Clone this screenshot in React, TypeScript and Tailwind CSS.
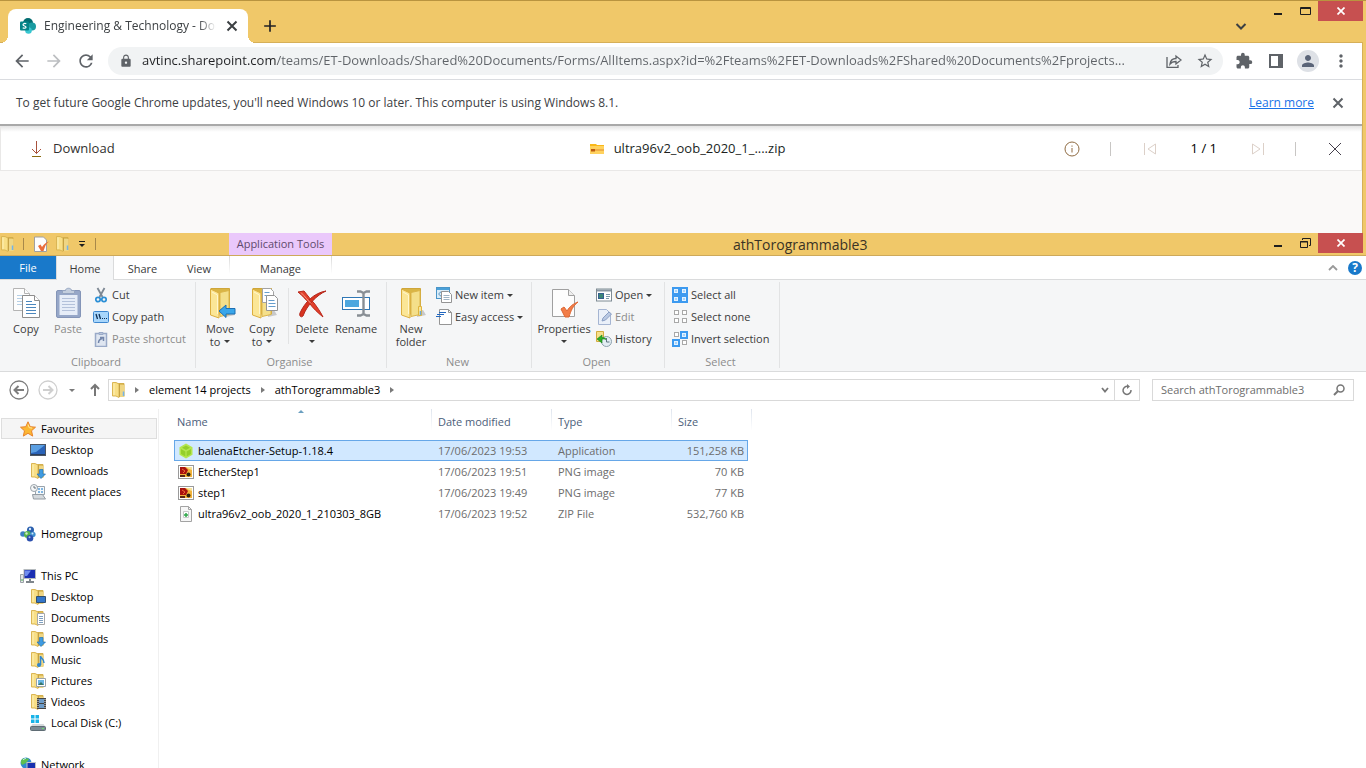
import { ReactNode } from "react";
import {
  MdAdd,
  MdArrowBack,
  MdArrowForward,
  MdExtension,
  MdLock,
  MdMoreVert,
  MdPerson,
  MdRefresh,
  MdStarBorder,
} from "react-icons/md";

const url =
  "avtinc.sharepoint.com/teams/ET-Downloads/Shared%20Documents/Forms/AllItems.aspx?id=%2Fteams%2FET-Downloads%2FShared%20Documents%2Fprojects...";

// ---------- icons ----------

const Svg = ({ size = 16, children }: { size?: number; children: ReactNode }) => (
  <svg width={size} height={size} viewBox={`0 0 ${size} ${size}`} className="shrink-0" fill="none" aria-hidden="true">
    {children}
  </svg>
);

const CrossIcon = () => (
  <Svg>
    <path d="M3.500 3.500l9 9M12.500 3.500l-9 9" stroke="currentColor" strokeWidth="2" />
  </Svg>
);

const ChevronIcon = () => (
  <Svg>
    <path d="M3.500 6l4.500 4.500L12.500 6" stroke="currentColor" strokeWidth="2" />
  </Svg>
);

const FolderShape = () => (
  <>
    <path d="M5.500 1.500h7.500v12.500H5.500z" fill="#dfbe5c" stroke="#d3ae4c" />
    <path d="M9 3h4.500v12H8z" fill="#efd684" />
    <path d="M1.500.500H5l3 1.500v13.500l-3-1.500H1.500z" fill="#f8df86" stroke="#dbb654" />
    <path d="M3 1.500v11.500" stroke="#fdf1ba" />
    <path d="M8.500 2v13" stroke="#bf9a3c" strokeWidth=".8" />
  </>
);

const FolderIcon = ({ children }: { children?: ReactNode }) => (
  <Svg>
    <FolderShape />
    {children ?? <path d="M12.500 9.500v4.500" stroke="#74b4e8" strokeWidth="1.500" />}
  </Svg>
);

const BigFolder = ({ children }: { children?: ReactNode }) => (
  <Svg size={32}>
    <g transform="translate(2 0)">
      <path d="M20 30l9-2-3-5-6 1z" fill="#000" opacity=".18" />
      <path d="M5 1.500h18.500V27H12z" fill="#d9b545" stroke="#cfa63a" />
      <path d="M14 5.500l9-2v24l-9 2z" fill="#f4df8a" stroke="#dcb54a" />
      <path d="M4.500 2L13 6v25l-8.500-3z" fill="#fbe696" stroke="#dcae3f" />
      <path d="M6 5l5.500 3v19" stroke="#fff6cc" />
    </g>
    {children ?? (
      <>
        <path d="M23.500 19.500h3v9h-3z" fill="#f8e69a" stroke="#e0b53e" />
        <path d="M25.500 24v4" stroke="#6aa9e0" strokeWidth="1.500" />
      </>
    )}
  </Svg>
);

const CopyIcon = () => (
  <Svg size={32}>
    <g stroke="#b4b4b4" fill="#fdfdfd">
      <path d="M3.500 1.500h11l5 5v17h-16z" />
      <path d="M14.500 1.500v5h5" />
    </g>
    <path d="M7 8.500h6M7 11.500h5M7 14.500h5M7 17.500h5" stroke="#b5cfe6" />
    <g stroke="#8d8d8d" fill="#fff">
      <path d="M12.500 8.500h12l5 5v17h-17z" />
      <path d="M24.500 8.500v5h5" />
    </g>
    <path d="M16 14.500h6M16 17.500h10M16 20.500h10M16 23.500h10M16 26.500h10" stroke="#4c87bd" />
  </Svg>
);

const PasteIcon = () => (
  <Svg size={32}>
    <rect x="4.500" y="3.500" width="24" height="27" rx="1.500" fill="#96a7c8" stroke="#8495b8" />
    <rect x="7.500" y="8" width="18" height="20" fill="#e6edf8" />
    <path d="M10 11.500h13M10 14.500h13M10 17.500h13M10 20.500h13M10 23.500h13" stroke="#b3c1da" />
    <path d="M10.500 6.500v-3h3c0-3 6-3 6 0h3v3z" fill="#c3cede" stroke="#94a4c0" />
  </Svg>
);

const CutIcon = () => (
  <Svg>
    <path d="M4.500 1l5 9M11.500 1l-5 9" stroke="#7d8894" strokeWidth="1.800" />
    <circle cx="5" cy="12.500" r="2.200" stroke="#2b8fd6" strokeWidth="1.700" />
    <circle cx="11" cy="12.500" r="2.200" stroke="#2b8fd6" strokeWidth="1.700" />
  </Svg>
);

const CopyPathIcon = () => (
  <Svg>
    <rect x=".5" y="2.500" width="15" height="11" rx="1" fill="#a8d6fb" stroke="#3d86cf" />
    <path d="M3 5l1.500 5M6 5l1.500 5" stroke="#0f2f55" strokeWidth="1.300" />
    <path d="M9 9.500h1M11 9.500h1M13 9.500h1" stroke="#0f2f55" />
  </Svg>
);

const PasteShortcutIcon = () => (
  <Svg>
    <rect x="2.500" y="2.500" width="11" height="13" fill="#dfe6f1" stroke="#9aaac8" strokeWidth="1.500" />
    <path d="M6 1.500h4v2H6z" fill="#b9c5da" stroke="#9aaac8" />
    <path d="M5.500 12c0-3 1-4 4-4.500M7 6.500h3.500V10" stroke="#7386ab" strokeWidth="1.500" />
  </Svg>
);

const DeleteIcon = () => (
  <Svg size={32}>
    <path d="M2 5l6-1c4 5 7 9 10 12 3 4 6 8 9 14-6-5-10-9-13-13C10 13 6 8 2 5z" fill="#e2402b" stroke="#b9281b" />
    <path d="M30 4C21 8 11 18 7 29c-2 2-4 0-3-3C9 15 18 6 30 4z" fill="#d83420" stroke="#b3261a" />
    <path d="M5 5.500c4 4 7 8 10 11" stroke="#f59a84" />
  </Svg>
);

const RenameIcon = () => (
  <Svg size={32}>
    <rect x="2.500" y="10.500" width="27" height="12" fill="#fff" stroke="#2f77b5" />
    <rect x="5" y="13" width="14" height="7" fill="#4ea7de" />
    <path d="M17 4.500h3.500l3 1.500 3-1.500H30M17 28.500h3.500l3-1.500 3 1.500H30M23.500 6v21" stroke="#888e94" strokeWidth="2.400" />
  </Svg>
);

const NewItemIcon = () => (
  <Svg>
    <rect x=".5" y=".5" width="13" height="11" fill="#d9ecf8" stroke="#4a95c8" />
    <path d="M1 2h12" stroke="#4aa0d8" strokeWidth="2" />
    <path d="M6 5c-4 0-4 4 0 4" stroke="#4f8ebd" />
    <path d="M5.500 4.500h7l3 3v8h-10z" fill="#fff" stroke="#949494" />
    <path d="M7.500 8.500h6M7.500 10.500h6M7.500 12.500h6" stroke="#9fb4c4" />
  </Svg>
);

const EasyAccessIcon = () => (
  <Svg>
    <path d="M3.500.500h9l3 3v12h-12z" fill="#fff" stroke="#959595" />
    <path d="M12.500.500v3h3" stroke="#959595" />
    <path d="M3 3.500h7M1 5.500h7M0 7.500h5" stroke="#2167c0" strokeWidth="1.200" />
  </Svg>
);

const PropertiesIcon = () => (
  <Svg size={32}>
    <path d="M4.500 2.500h16l6 6v21h-22z" fill="#fdfdfd" stroke="#a0a0a0" />
    <path d="M20.500 2.500v6h6" fill="#eee" stroke="#a0a0a0" />
    <path d="M13 22l3-2 3 4c3-5 6-7 11-9-5 4-7 8-9 15h-4z" fill="#f27d48" stroke="#dd6632" />
  </Svg>
);

const CheckedPage = () => (
  <Svg>
    <path d="M1.500 1h9l3 3v11.500h-12z" fill="#fdfdfd" stroke="#a0a0a0" />
    <path d="M5 10l2.500-1.500L9 11c2-3 4-4.500 7-5.500-3 2-4 5-5.500 9.500H8z" fill="#ea6d3b" />
  </Svg>
);

const OpenIcon = () => (
  <Svg>
    <rect x=".5" y="2" width="15" height="12" fill="#fff" stroke="#7f8b94" />
    <path d="M1 3.500h14" stroke="#8b98a3" strokeWidth="2" />
    <rect x="2.500" y="6.500" width="5" height="5" fill="#3c8677" stroke="#35608f" />
    <path d="M10 7.500h4M10 9.500h4M10 11.500h3" stroke="#7d9aaa" />
  </Svg>
);

const EditIcon = () => (
  <Svg>
    <path d="M2.500.500h8l4 4v11h-12z" fill="#eaf0f9" stroke="#a5b5d2" />
    <path d="M6 12l1-3 6-6 2.500 2-6 6z" fill="#b9c9e3" stroke="#8b9fc4" />
  </Svg>
);

const HistoryIcon = () => (
  <Svg>
    <path d="M.5.500h7v10h-7z" fill="#f5e08c" stroke="#d2ab3e" />
    <circle cx="10.500" cy="10.500" r="5" fill="#e3edf3" stroke="#8ca0ad" />
    <path d="M10.500 7v4h3" stroke="#5d7482" />
    <path d="M1 8l5-4v2.500c3 0 4 1 4 2-1-.5-2-.5-4-.5V12z" fill="#2cae26" stroke="#16821a" strokeWidth=".6" />
  </Svg>
);

// tiles that are picked are filled blue, the others are left grey
const SelectIcon = ({ picked }: { picked: boolean[] }) => (
  <Svg>
    {picked.map((on, i) => {
      const x = (i % 2) * 8;
      const y = Math.floor(i / 2) * 8;
      return on ? (
        <g key={i}>
          <rect x={x} y={y} width="8" height="8" fill="#3c9af0" />
          <rect x={x + 2.5} y={y + 2.5} width="3" height="3" fill="#a7d4fb" stroke="#e3f2ff" />
        </g>
      ) : (
        <rect key={i} x={x + 2.5} y={y + 1.5} width="4" height="4" fill="#fff" stroke="#a8a8a8" />
      );
    })}
  </Svg>
);

const StarIcon = () => (
  <Svg>
    <path d="M8 .8l2.200 4.900 5.300.5-4 3.600 1.200 5.300L8 12.300l-4.700 2.800 1.200-5.300-4-3.600 5.300-.5z" fill="#fbb733" stroke="#e8822a" />
    <path d="M8 3.500l1.200 3.200 3 .4" stroke="#ffe99a" />
  </Svg>
);

const DesktopIcon = () => (
  <Svg>
    <rect x=".5" y="2.500" width="15" height="11" fill="#2a63b8" stroke="#4b5563" />
    <path d="M1 3h14L6 10l-5 1z" fill="#5b9fe2" />
    <path d="M1 12.500h14" stroke="#2b3f5c" />
  </Svg>
);

const RecentIcon = () => (
  <Svg>
    <path d="M5.500 2.500h9v8h-9z" fill="#f4f8fb" stroke="#99a3ab" />
    <path d="M8 5h2M11 5h2M8 8h2M11 8h2" stroke="#5aa0da" strokeWidth="1.500" />
    <path d="M2.500 10.500h10l3 4.500h-12z" fill="#d5dade" stroke="#949ca3" />
    <circle cx="4" cy="4" r="3.500" fill="#f5f7f8" stroke="#9aa3aa" />
    <path d="M4 2v2h2" stroke="#66727b" />
  </Svg>
);

const HomegroupIcon = () => (
  <Svg>
    <circle cx="3" cy="8" r="2.800" fill="#3b7fc4" />
    <circle cx="10.500" cy="4" r="3.500" fill="#2a5fae" />
    <circle cx="7.500" cy="8.500" r="3.500" fill="#57b34a" />
    <circle cx="12.800" cy="8.500" r="2.800" fill="#3f8fce" />
    <circle cx="10" cy="12.300" r="3.300" fill="#2b4fae" />
    <circle cx="6.500" cy="7.500" r="1.200" fill="#cdeec6" />
    <circle cx="10" cy="3" r="1.200" fill="#d3e6f8" />
    <circle cx="9.500" cy="11.300" r="1" fill="#a9bdf0" />
    <circle cx="12.500" cy="7.500" r="1" fill="#d3e6f8" />
  </Svg>
);

const PcIcon = () => (
  <Svg>
    <path d="M.5 6.500h3v8h-3z" fill="#e0e4e7" stroke="#9aa1a7" />
    <path d="M2 11v2" stroke="#4bb34b" />
    <rect x="4" y="1.500" width="11.500" height="9" fill="#1b2fb2" stroke="#b5babe" />
    <path d="M5 2.500h6L7 8H5z" fill="#6f8cf0" />
    <path d="M10 11v2M6 14h8" stroke="#7f868c" strokeWidth="2" />
  </Svg>
);

const NetworkIcon = () => (
  <Svg>
    <circle cx="6" cy="6" r="5.500" fill="#2f8ad0" />
    <path d="M3 1.500C6 2 8 1 9 2L6 6 2 8C0 5 1 3 3 1.500z" fill="#5fc04e" />
    <path d="M3 3c1-1 2-1.500 3-1.500" stroke="#def5ff" />
    <rect x="7" y="5.500" width="8.500" height="8" fill="#1931b0" stroke="#c0c4c8" />
    <path d="M9 15h5" stroke="#80868b" />
  </Svg>
);

const DiskIcon = () => (
  <Svg>
    <path d="M1 0h3.500v3.500H1zM5.500 0H9v3.500H5.500zM1 4.500h3.500V8H1zM5.500 4.500H9V8H5.500z" fill="#18b3e8" />
    <path d="M2.500 9h11l2 3H.5z" fill="#d5d9dc" />
    <rect x=".5" y="11.500" width="15" height="4" rx="1" fill="#7c8a93" stroke="#5f6c74" />
    <path d="M12 13.500h2" stroke="#66e06d" />
  </Svg>
);

const EtcherIcon = () => (
  <Svg>
    <path d="M8 .5l6.500 3.700v7.600L8 15.500l-6.500-3.700V4.200z" fill="#b4e650" />
    <path d="M8 2.500l4 2.200-4 2.300-4-2.300zM3 6l4.400 2.500v5L3 11zM13 6L8.600 8.500v5L13 11z" fill="#94cf2c" />
  </Svg>
);

const PngIcon = () => (
  <Svg>
    <rect x=".5" y="1.500" width="15" height="13" fill="#fff" stroke="#9a9a9a" />
    <path d="M2 3h12v10H2z" fill="#f2b33a" />
    <path d="M2 3h5l3 3-2 4H2z" fill="#a8120e" />
    <path d="M8 3h6v3l-3-1z" fill="#f7e29a" />
    <circle cx="10.500" cy="10.500" r="2" fill="#2e2411" />
    <path d="M4 5l3 2-2 2" stroke="#f06a35" />
    <path d="M2 11h5v2H2z" fill="#5a2a14" />
  </Svg>
);

const ZipIcon = () => (
  <Svg>
    <path d="M2.500.500h8l3 3v12h-11z" fill="#f7f7f7" stroke="#a3a3a3" />
    <path d="M10.500.500v3h3" stroke="#a3a3a3" />
    <path d="M5.500 5.500h5v6h-5z" fill="#fff" stroke="#c8c8c8" />
    <path d="M8 7v4M6 9h4" stroke="#2fa84a" strokeWidth="1.500" />
  </Svg>
);

const SharePointLogo = () => (
  <Svg>
    <circle cx="8" cy="5" r="5" fill="#036c70" />
    <circle cx="12" cy="8.500" r="4" fill="#1a9ba1" />
    <circle cx="8.500" cy="12.500" r="3.300" fill="#37c6d0" />
    <rect x="0" y="3.500" width="9" height="9" rx="1" fill="#038387" />
    <path d="M6.300 5.800c-1.500-.7-3.300-.3-3.300 1 0 1.500 3 1 3 2.400 0 1.200-2 1.300-3.300.6" stroke="#fff" strokeWidth="1.200" />
  </Svg>
);

const Caret = () => <span className="block border-x-[3px] border-t-[3px] border-x-transparent border-t-current" />;

// ---------- shared controls ----------

const WindowButtons = ({ restore }: { restore?: boolean }) => (
  <div className="flex mr-[3px] text-[#1e1e1e]">
    <button aria-label="Minimise" className="w-7 h-5 grid place-items-center">
      <svg width="8" height="12" aria-hidden="true">
        <path d="M0 8h8v2H0z" fill="currentColor" />
      </svg>
    </button>
    <button aria-label="Maximise" className="w-[26px] h-5 grid place-items-center">
      <svg width="11" height="11" fill="none" stroke="currentColor" aria-hidden="true">
        {restore ? (
          <>
            <path d="M2.500 2V.5h8v7H9M.5 3.500h7v6h-7z" />
            <path d="M0 4h8" />
          </>
        ) : (
          <path d="M.5 1.500h10v7H.5zM0 2.500h11" />
        )}
      </svg>
    </button>
    <button aria-label="Close" className="w-[45px] h-5 bg-[#c75050] text-white grid place-items-center">
      <svg width="8" height="8" stroke="currentColor" strokeWidth="1.700" aria-hidden="true">
        <path d="M.5.500l7 7M7.500.500l-7 7" />
      </svg>
    </button>
  </div>
);

const BigButton = ({ icon, label, second, caret, muted }: any) => (
  <button className={`w-[42px] pt-[7px] flex flex-col items-center leading-[13px] ${muted ? "text-[#8c8c8c]" : "text-[#3b3b3b]"}`}>
    {icon}
    <span className="mt-[3px] whitespace-nowrap">{label}</span>
    {(second || caret) && (
      <span className="h-[13px] flex items-center gap-1">
        {second}
        {caret && <Caret />}
      </span>
    )}
  </button>
);

const SmallButton = ({ icon, label, caret, muted }: any) => (
  <button className={`h-[22px] flex items-center gap-[3px] whitespace-nowrap ${muted ? "text-[#8c8c8c]" : "text-[#3b3b3b]"}`}>
    {icon}
    {label}
    {caret && <Caret />}
  </button>
);

const Group = ({ name, className, children }: { name: string; className: string; children: ReactNode }) => (
  <section aria-label={name} className={`relative flex flex-col justify-between ${className}`}>
    <div className="flex">{children}</div>
    <div className="text-center text-[#8c8c8c] leading-[19px] pr-1">{name}</div>
    <span className="absolute right-0 top-[2px] bottom-[3px] w-px bg-[#e2e3e4]" />
  </section>
);

// ---------- data ----------

const DownloadsIcon = () => (
  <FolderIcon>
    <path d="M9.500 6.500h3.500V11h2.500L11 15.500 7 11h2.500z" fill="#3f9be0" stroke="#2772b5" strokeWidth=".7" />
  </FolderIcon>
);

const places: any[] = [
  { name: "Favourites", icon: <StarIcon />, root: true, active: true },
  { name: "Desktop", icon: <DesktopIcon /> },
  { name: "Downloads", icon: <DownloadsIcon /> },
  { name: "Recent places", icon: <RecentIcon /> },
  null,
  { name: "Homegroup", icon: <HomegroupIcon />, root: true },
  null,
  { name: "This PC", icon: <PcIcon />, root: true },
  {
    name: "Desktop",
    icon: (
      <FolderIcon>
        <path d="M6.500 7.500h9v6h-9z" fill="#3476ca" stroke="#33506f" />
      </FolderIcon>
    ),
  },
  {
    name: "Documents",
    icon: (
      <FolderIcon>
        <path d="M7.500 3.500h7v11h-7z" fill="#fff" stroke="#a7a7a7" />
        <path d="M9 6.500h4M9 8.500h4M9 10.500h4M9 12.500h4" stroke="#7d9fc0" />
      </FolderIcon>
    ),
  },
  { name: "Downloads", icon: <DownloadsIcon /> },
  {
    name: "Music",
    icon: (
      <FolderIcon>
        <path d="M10.500 13V4c0 2 4 3 3.500 7" stroke="#2f86cf" strokeWidth="1.500" />
        <circle cx="9" cy="13" r="2" fill="#2f86cf" />
      </FolderIcon>
    ),
  },
  {
    name: "Pictures",
    icon: (
      <FolderIcon>
        <path d="M6.500 5.500h9v8h-9z" fill="#fff" stroke="#9ba3a9" />
        <path d="M8 7h6v5H8z" fill="#6bb6e4" />
        <path d="M8 12l3-3 3 3z" fill="#39766a" />
      </FolderIcon>
    ),
  },
  {
    name: "Videos",
    icon: (
      <FolderIcon>
        <path d="M7 4h9v11H7z" fill="#444" />
        <path d="M9 5h5v4H9zM9 10h5v4H9z" fill="#6d9cc9" />
        <path d="M8 5v9M15 5v9" stroke="#e8e8e8" strokeDasharray="1 1" />
      </FolderIcon>
    ),
  },
  { name: "Local Disk (C:)", icon: <DiskIcon /> },
  null,
  { name: "Network", icon: <NetworkIcon />, root: true },
];

const files = [
  { name: "balenaEtcher-Setup-1.18.4", date: "17/06/2023 19:53", type: "Application", size: "151,258 KB", icon: <EtcherIcon />, selected: true },
  { name: "EtcherStep1", date: "17/06/2023 19:51", type: "PNG image", size: "70 KB", icon: <PngIcon /> },
  { name: "step1", date: "17/06/2023 19:49", type: "PNG image", size: "77 KB", icon: <PngIcon /> },
  { name: "ultra96v2_oob_2020_1_210303_8GB", date: "17/06/2023 19:52", type: "ZIP File", size: "532,760 KB", icon: <ZipIcon /> },
];

// ---------- browser ----------

function Browser() {
  return (
    <div className="shrink-0 h-[233px] flex flex-col bg-[#f0c869] border-t border-[#b9943f]">
      <div className="h-[42px] flex justify-between">
        <div className="flex items-end pl-2">
          <div className="relative h-[34px] w-60 rounded-t-lg bg-white flex items-center pl-3 pr-2 gap-2 text-[12px] text-[#3c4043]">
            <SharePointLogo />
            <span className="flex-1 overflow-hidden whitespace-nowrap [mask-image:linear-gradient(90deg,#000_90%,transparent)]">
              Engineering &amp; Technology - Documents
            </span>
            <button aria-label="Close tab">
              <CrossIcon />
            </button>
            <span className="absolute -left-2 bottom-0 size-2 bg-[radial-gradient(circle_at_0_0,transparent_8px,#fff_8px)]" />
            <span className="absolute -right-2 bottom-0 size-2 bg-[radial-gradient(circle_at_100%_0,transparent_8px,#fff_8px)]" />
          </div>
          <button aria-label="New tab" className="h-[34px] ml-3 text-[#202124]">
            <MdAdd size={20} />
          </button>
        </div>
        <div className="flex">
          <button aria-label="Search tabs" className="mt-2 mr-[15px] text-[#3c4043]">
            <ChevronIcon />
          </button>
          <WindowButtons />
        </div>
      </div>

      <div className="flex-1 mr-1 bg-white flex flex-col outline outline-[#c59f4c]/60">
        <div className="h-[37px] border-b border-[#dadce0] flex items-center pl-3 pr-[11px] text-[#5f6368]">
          <button aria-label="Back" className="mr-3">
            <MdArrowBack size={20} />
          </button>
          <button aria-label="Forward" className="mr-3 text-[#bcbec1]">
            <MdArrowForward size={20} />
          </button>
          <button aria-label="Reload" className="mr-3">
            <MdRefresh size={20} />
          </button>
          <div className="flex-1 min-w-0 h-7 rounded-full bg-[#f1f3f4] flex items-center pl-[11px] pr-[9px]">
            <MdLock size={14} className="shrink-0" />
            <input
              aria-label="Address"
              readOnly
              value={url}
              className="flex-1 min-w-0 ml-[9px] mr-4 text-[13px] text-transparent bg-clip-text bg-[linear-gradient(90deg,#202124_134px,#5f6368_134px)]"
            />
            <button aria-label="Share" className="mr-[14px]">
              <svg width="16" height="16" fill="none" stroke="currentColor" strokeWidth="1.300" aria-hidden="true">
                <path d="M1 4v10.300h11V12" />
                <path d="M4 11c.5-4 3-5.500 6-5.500V3l5 4-5 4V8.500c-2.500 0-4.500.5-6 2.500z" />
              </svg>
            </button>
            <button aria-label="Bookmark">
              <MdStarBorder size={18} />
            </button>
          </div>
          <button aria-label="Extensions" className="ml-3">
            <MdExtension size={18} />
          </button>
          <button aria-label="Side panel" className="ml-4">
            <svg width="14" height="14" fill="none" aria-hidden="true">
              <path d="M1 1h12v12H1z" stroke="currentColor" strokeWidth="2" />
              <path d="M9 1h4v12H9z" fill="currentColor" />
            </svg>
          </button>
          <button aria-label="Profile" className="ml-[14px] size-[22px] rounded-full bg-[#dee1e6] text-[#5a6478] grid place-items-center">
            <MdPerson size={18} />
          </button>
          <button aria-label="Menu" className="ml-3">
            <MdMoreVert size={20} />
          </button>
        </div>

        <div className="h-[46px] shrink-0 border-b-2 border-[#a9a9a9] flex items-center justify-between pl-4 pr-4 pt-px text-[12px] text-[#3c4043]">
          <span>To get future Google Chrome updates, you'll need Windows 10 or later. This computer is using Windows 8.1.</span>
          <div className="flex items-center gap-4">
            <a href="#" className="text-[#1a73e8] underline">
              Learn more
            </a>
            <button aria-label="Dismiss" className="text-[#5f6368]">
              <CrossIcon />
            </button>
          </div>
        </div>

        <div className="flex-1 bg-[#faf9f8]">
          <div className="h-[45px] grid grid-cols-[1fr_auto_1fr] items-center pt-px pl-[27px] pr-[19px] border border-t-0 border-[#e9e8e7] bg-[linear-gradient(#e4e4e4,#fff_6px)] text-[13px] text-[#323130]">
            <button className="flex items-center gap-[9px]">
              <svg width="16" height="16" fill="none" stroke="#a8513c" aria-hidden="true">
                <path d="M8.500 0v12.500M4 8l4.500 4.500L13 8" />
                <path d="M4 15.500h9" stroke="#8a6a10" />
              </svg>
              Download
            </button>
            <div className="ml-1 flex items-center gap-[9px] text-[#201f1e]">
              <svg width="16" height="16" aria-hidden="true">
                <path d="M1 3h6l1 1h7v3H1z" fill="#f9b818" />
                <path d="M1 5h14v8H1z" fill="#ffd25e" />
                <path d="M4 8.500h11v1H4z" fill="#e08a2e" />
                <path d="M2 8h4v2.500H2z" fill="#bd5a10" />
              </svg>
              ultra96v2_oob_2020_1_....zip
            </div>
            <div className="flex items-center justify-end text-[#c8c6c4]">
              <button aria-label="Details">
                <svg width="16" height="16" fill="none" stroke="#8f6b42" aria-hidden="true">
                  <circle cx="8" cy="8" r="7" />
                  <path d="M8 7v4.500M8 4.500v1.200" />
                </svg>
              </button>
              <span className="ml-[30px] w-px h-3.5 bg-[#c8c6c4]" />
              <button aria-label="Previous" className="ml-8">
                <svg width="14" height="14" fill="none" stroke="#dcd0c8" aria-hidden="true">
                  <path d="M1.500 1v12M12.500 2v10L5 7z" />
                </svg>
              </button>
              <span className="ml-[34px] text-black">1 / 1</span>
              <button aria-label="Next" className="ml-[34px]">
                <svg width="14" height="14" fill="none" stroke="#dcd0c8" aria-hidden="true">
                  <path d="M12.500 1v12M1.500 2v10L9 7z" />
                </svg>
              </button>
              <span className="ml-[30px] w-px h-3.5 bg-[#c8c6c4]" />
              <button aria-label="Close preview" className="ml-8">
                <svg width="14" height="14" stroke="#45404c" aria-hidden="true">
                  <path d="M1 1l12 12M13 1L1 13" />
                </svg>
              </button>
            </div>
          </div>
        </div>
      </div>
    </div>
  );
}

// ---------- explorer ----------

function Ribbon() {
  return (
    <div className="shrink-0 h-[93px] flex border-y border-[#dadbdc] bg-[#f5f6f7]">
      <Group name="Clipboard" className="w-[196px]">
        <div className="flex pl-[5px]">
          <BigButton icon={<CopyIcon />} label="Copy" />
          <BigButton icon={<PasteIcon />} label="Paste" muted />
        </div>
        <div className="pt-1 pl-1">
          <SmallButton icon={<CutIcon />} label="Cut" />
          <SmallButton icon={<CopyPathIcon />} label="Copy path" />
          <SmallButton icon={<PasteShortcutIcon />} label="Paste shortcut" muted />
        </div>
      </Group>
      <Group name="Organise" className="w-[191px]">
        <div className="flex pl-[3px]">
          <BigButton
            label="Move"
            second="to"
            caret
            icon={
              <BigFolder>
                <path d="M15 24l7-6v3.500h9v5.500h-9v3.500z" fill="#39a6ea" stroke="#1d6fb3" />
              </BigFolder>
            }
          />
          <BigButton
            label="Copy"
            second="to"
            caret
            icon={
              <BigFolder>
                <path d="M16.500 1.500h8l3 3v11h-11z" fill="#fff" stroke="#a3a3a3" />
                <path d="M20.500 8.500h8l3 3v12h-11z" fill="#fff" stroke="#959595" />
                <path d="M18.500 5.500h5M18.500 8.500h2M22.500 13.500h6M22.500 16.500h7M22.500 19.500h7" stroke="#659dcc" />
              </BigFolder>
            }
          />
        </div>
        <span className="mt-2 ml-[5px] mr-[2px] w-px h-14 bg-[#e2e3e4]" />
        <div className="flex gap-[2px]">
          <BigButton icon={<DeleteIcon />} label="Delete" caret />
          <BigButton icon={<RenameIcon />} label="Rename" />
        </div>
      </Group>
      <Group name="New" className="w-[145px]">
        <div className="pl-[3px]">
          <BigButton icon={<BigFolder />} label="New" second="folder" />
        </div>
        <div className="pt-1 pl-1">
          <SmallButton icon={<NewItemIcon />} label="New item" caret />
          <SmallButton icon={<EasyAccessIcon />} label="Easy access" caret />
        </div>
      </Group>
      <Group name="Open" className="w-[133px]">
        <div className="pl-[11px]">
          <BigButton icon={<PropertiesIcon />} label="Properties" caret />
        </div>
        <div className="pt-1 pl-[11px]">
          <SmallButton icon={<OpenIcon />} label="Open" caret />
          <SmallButton icon={<EditIcon />} label="Edit" muted />
          <SmallButton icon={<HistoryIcon />} label="History" />
        </div>
      </Group>
      <Group name="Select" className="w-[115px]">
        <div className="pt-1 pl-[7px]">
          <SmallButton icon={<SelectIcon picked={[true, true, true, true]} />} label="Select all" />
          <SmallButton icon={<SelectIcon picked={[false, false, false, false]} />} label="Select none" />
          <SmallButton icon={<SelectIcon picked={[false, true, true, false]} />} label="Invert selection" />
        </div>
      </Group>
    </div>
  );
}

const Crumb = () => <span className="border-y-[3px] border-l-4 border-y-transparent border-l-[#7a7a7a]" />;

function AddressRow() {
  return (
    <div className="shrink-0 h-9 flex items-center pl-[9px] pr-3 text-[#7a7a7a]">
      <button aria-label="Back" className="mr-[9px]">
        <svg width="20" height="20" fill="none" stroke="#7d7d7d" aria-hidden="true">
          <circle cx="10" cy="10" r="9" strokeWidth="1.300" />
          <path d="M15 10H6M9.500 6L5.500 10l4 4" strokeWidth="2" />
        </svg>
      </button>
      <button aria-label="Forward">
        <svg width="20" height="20" fill="none" stroke="#cfcfcf" aria-hidden="true">
          <circle cx="10" cy="10" r="9" strokeWidth="1.300" />
          <path d="M5 10h9M10.500 6l4 4-4 4" strokeWidth="2" />
        </svg>
      </button>
      <button aria-label="Recent locations" className="ml-[11px] mr-[15px]">
        <Caret />
      </button>
      <button aria-label="Up" className="mr-2">
        <svg width="10" height="14" fill="none" stroke="#777" strokeWidth="2" aria-hidden="true">
          <path d="M5 13V2M1 6l4-4 4 4" />
        </svg>
      </button>
      <div className="flex-1 h-[22px] border border-[#d9d9d9] flex items-center pl-[2px] text-black">
        <FolderIcon />
        <nav aria-label="Location" className="flex-1 flex items-center gap-[10px] ml-2">
          <Crumb />
          <button>element 14 projects</button>
          <Crumb />
          <button>athTorogrammable3</button>
          <Crumb />
        </nav>
        <button aria-label="Previous locations" className="w-[18px] grid place-items-center">
          <svg width="8" height="6" fill="none" stroke="#777" strokeWidth="1.800" aria-hidden="true">
            <path d="M1 1l3 3.500L7 1" />
          </svg>
        </button>
        <button aria-label="Refresh" className="w-[25px] h-full border-l border-[#d9d9d9] grid place-items-center">
          <svg width="12" height="12" fill="none" stroke="#777" strokeWidth="1.500" aria-hidden="true">
            <path d="M7 2.500a4 4 0 1 0 3 3.500" />
            <path d="M6 0l3 2.500L6 5z" fill="#777" stroke="none" />
          </svg>
        </button>
      </div>
      <label className="ml-3 w-[202px] h-[22px] border border-[#d9d9d9] flex items-center pl-2 pr-2">
        <input
          aria-label="Search"
          placeholder="Search athTorogrammable3"
          className="flex-1 min-w-0 outline-none placeholder:text-[#6d6d6d]"
        />
        <svg width="12" height="12" fill="none" stroke="#777" strokeWidth="1.500" aria-hidden="true">
          <circle cx="7.500" cy="4.500" r="3.500" />
          <path d="M5 7L1 11" strokeWidth="2" />
        </svg>
      </label>
    </div>
  );
}

function Explorer() {
  return (
    <div className="flex-1 min-h-0 flex flex-col bg-white text-[11px]">
      <div className="relative shrink-0 h-[23px] bg-[#f0c869] border-b border-[#cda95a] flex justify-between">
        <div className="flex">
          <div className="w-[229px] flex items-center text-[#1e1e1e]">
            <FolderIcon />
            <span className="ml-[7px] w-px h-3 bg-[#a8894a]" />
            <span className="ml-[9px]">
              <CheckedPage />
            </span>
            <span className="ml-[6px]">
              <FolderIcon />
            </span>
            <button aria-label="Customise toolbar" className="ml-2 pt-[2px] border-t border-current">
              <Caret />
            </button>
            <span className="ml-[10px] w-px h-3 bg-[#a8894a]" />
          </div>
          <div className="w-[103px] text-center leading-[21px] bg-[#eac8fb] text-[#604a6c]">Application Tools</div>
        </div>
        <h1 className="absolute left-1/2 top-0 ml-[50px] text-[14px] leading-[23px] text-[#3a3325]">athTorogrammable3</h1>
        <WindowButtons restore />
      </div>

      <div className="shrink-0 h-6 -mb-px flex justify-between leading-[26px] text-[#3b3b3b]">
        <div className="flex">
          <button className="w-14 h-[23px] bg-[#1979ca] text-white leading-[24px]">File</button>
          <button className="relative w-[58px] border-x border-[#dadbdc] bg-[#f5f6f7] z-10">Home</button>
          <button className="w-[57px]">Share</button>
          <button className="w-[56px]">View</button>
          <button className="ml-[2px] w-[103px] bg-[linear-gradient(#d8d8d8,#fff),linear-gradient(#d8d8d8,#fff)] bg-[length:1px_18px] bg-[position:left_top,right_top] bg-no-repeat">
            Manage
          </button>
        </div>
        <div className="flex items-center gap-[10px] pr-1">
          <button aria-label="Collapse ribbon">
            <svg width="10" height="6" fill="none" stroke="#999" strokeWidth="1.800" aria-hidden="true">
              <path d="M1 5l4-4 4 4" />
            </svg>
          </button>
          <button aria-label="Help" className="size-[14px] rounded-full bg-[#1979ca] text-white text-[12px] font-bold leading-[14px]">
            ?
          </button>
        </div>
      </div>

      <Ribbon />
      <AddressRow />

      <div className="flex-1 min-h-0 flex pt-px">
        <aside className="w-[159px] shrink-0 border-r border-[#f0f0f0] pt-[9px] overflow-hidden">
          <ul>
            {places.map((place, i) => {
              if (!place) return <li key={i} className="h-[21px]" />;
              return (
                <li key={i} className="pl-px pr-px">
                  <a
                    href="#"
                    className={`h-[21px] pt-px flex items-center gap-[5px] text-black ${place.root ? "pl-[19px]" : "pl-[29px]"} ${
                      place.active ? "bg-[#f5f5f5] outline outline-[#dedede] -outline-offset-1" : ""
                    }`}
                  >
                    {place.icon}
                    {place.name}
                  </a>
                </li>
              );
            })}
          </ul>
        </aside>

        <main className="flex-1 pl-[15px]">
          <table className="table-fixed w-[578px] border-separate border-spacing-0">
            <colgroup>
              <col className="w-[258px]" />
              <col className="w-[120px]" />
              <col className="w-[120px]" />
              <col className="w-[76px]" />
              <col className="w-1" />
            </colgroup>
            <thead>
              <tr className="text-left text-[#4c607a] [&>th]:font-normal [&>th]:h-[22px] [&>th]:pt-1">
                <th className="relative pl-[3px] bg-[linear-gradient(#dfe5ee,#fff)] bg-[length:1px_100%] bg-right bg-no-repeat">
                  Name
                  <span className="absolute left-[124px] top-px border-x-[3px] border-b-[3px] border-x-transparent border-b-[#6b9fc0]" />
                </th>
                <th className="pl-[6px] bg-[linear-gradient(#dfe5ee,#fff)] bg-[length:1px_100%] bg-right bg-no-repeat">Date modified</th>
                <th className="pl-[6px] bg-[linear-gradient(#dfe5ee,#fff)] bg-[length:1px_100%] bg-right bg-no-repeat">Type</th>
                <th colSpan={2} className="pl-[6px] bg-[linear-gradient(#dfe5ee,#fff)] bg-[length:1px_100%] bg-right bg-no-repeat">
                  Size
                </th>
              </tr>
              <tr>
                <td className="h-[9px]" />
              </tr>
            </thead>
            <tbody>
              {files.map((file) => {
                const cell = file.selected ? "bg-[#d1e8ff] border-y border-[#66a7e8]" : "";
                return (
                  <tr key={file.name} className="h-[21px] leading-[18px] text-[#6d6d6d]">
                    <td className={`${cell} text-black ${file.selected ? "border-l pl-[3px]" : "pl-1"}`}>
                      <span className="flex items-center gap-1">
                        {file.icon}
                        {file.name}
                      </span>
                    </td>
                    <td className={`${cell} pl-[6px]`}>{file.date}</td>
                    <td className={`${cell} pl-[6px]`}>{file.type}</td>
                    <td className={`${cell} text-right ${file.selected ? "border-r pr-[3px]" : "pr-1"}`}>{file.size}</td>
                    <td />
                  </tr>
                );
              })}
            </tbody>
          </table>
        </main>
      </div>
    </div>
  );
}

export default function App() {
  return (
    <div className="h-screen flex flex-col overflow-hidden font-['Open_Sans','Noto_Sans',sans-serif]">
      <Browser />
      <Explorer />
    </div>
  );
}
